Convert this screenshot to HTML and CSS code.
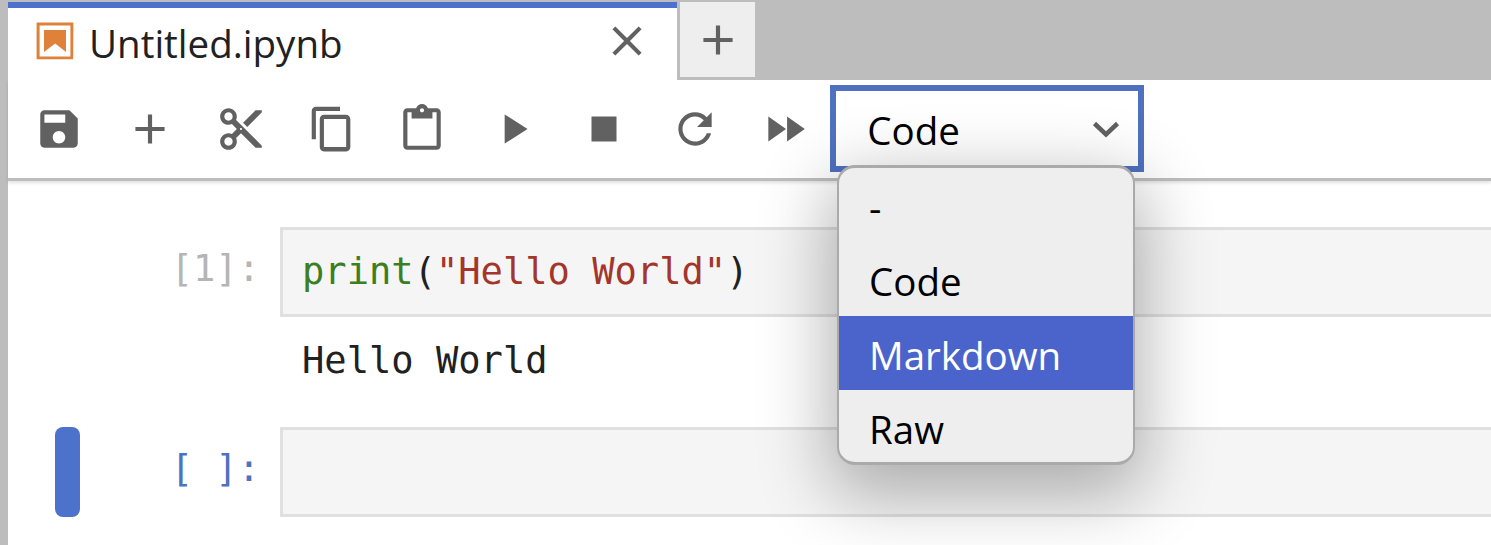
FILE: index.html
```html
<!DOCTYPE html>
<html lang="en">
<head>
<meta charset="utf-8">
<title>Untitled.ipynb</title>
<link rel="stylesheet" href="styles.css">
</head>
<body>
<div class="app">
  <div class="tabbar">
    <div class="tab">
      <svg class="tab-icon" viewBox="0 0 22 22"><path class="orange" d="M18.7 3.3v15.4H3.3V3.3h15.4m1.5-1.5H1.8v18.3h18.3l.1-18.3z"/><path class="orange" d="M16.5 16.5l-5.4-4.3-5.6 4.3v-11h11z"/></svg>
      <span class="tab-title">Untitled.ipynb</span>
      <svg class="tab-close" viewBox="0 0 24 24"><path d="M19 6.41L17.59 5 12 10.59 6.41 5 5 6.41 10.59 12 5 17.59 6.41 19 12 13.41 17.59 19 19 17.59 13.41 12z"/></svg>
    </div>
    <div class="new-tab">
      <svg class="icon" viewBox="0 0 24 24"><path d="M19 13h-6v6h-2v-6H5v-2h6V5h2v6h6v2z"/></svg>
    </div>
  </div>
  <div class="toolbar">
    <div class="tool"><svg class="icon" viewBox="0 0 24 24"><path d="M17 3H5c-1.11 0-2 .9-2 2v14c0 1.1.89 2 2 2h14c1.1 0 2-.9 2-2V7l-4-4zm-5 16c-1.66 0-3-1.34-3-3s1.34-3 3-3 3 1.34 3 3-1.34 3-3 3zm3-10H5V5h10v4z"/></svg></div>
    <div class="tool"><svg class="icon" viewBox="0 0 24 24"><path d="M19 13h-6v6h-2v-6H5v-2h6V5h2v6h6v2z"/></svg></div>
    <div class="tool"><svg class="icon" viewBox="0 0 24 24"><path d="M9.64 7.64c.23-.5.36-1.05.36-1.64 0-2.21-1.79-4-4-4S2 3.79 2 6s1.79 4 4 4c.59 0 1.14-.13 1.64-.36L10 12l-2.36 2.36C7.14 14.13 6.59 14 6 14c-2.21 0-4 1.79-4 4s1.79 4 4 4 4-1.79 4-4c0-.59-.13-1.14-.36-1.64L12 14l7 7h3v-1L9.64 7.64zM6 8c-1.1 0-2-.89-2-2s.9-2 2-2 2 .89 2 2-.9 2-2 2zm0 12c-1.1 0-2-.89-2-2s.9-2 2-2 2 .89 2 2-.9 2-2 2zm6-7.5c-.28 0-.5-.22-.5-.5s.22-.5.5-.5.5.22.5.5-.22.5-.5.5zM19 3l-6 6 2 2 7-7V3z"/></svg></div>
    <div class="tool"><svg class="icon" viewBox="0 0 18 18"><path d="M11.9,1H3.2C2.4,1,1.7,1.7,1.7,2.5v10.2h1.5V2.5h8.7V1z M14.1,3.9h-8c-0.8,0-1.5,0.7-1.5,1.5v10.2c0,0.8,0.7,1.5,1.5,1.5h8c0.8,0,1.5-0.7,1.5-1.5V5.4C15.5,4.6,14.9,3.9,14.1,3.9z M14.1,15.5h-8V5.4h8V15.5z"/></svg></div>
    <div class="tool"><svg class="icon" viewBox="0 0 24 24"><path d="M19 2h-4.18C14.4.84 13.3 0 12 0c-1.3 0-2.4.84-2.82 2H5c-1.1 0-2 .9-2 2v16c0 1.1.9 2 2 2h14c1.1 0 2-.9 2-2V4c0-1.1-.9-2-2-2zm-7 0c.55 0 1 .45 1 1s-.45 1-1 1-1-.45-1-1 .45-1 1-1zm7 18H5V4h2v3h10V4h2v16z"/></svg></div>
    <div class="tool"><svg class="icon" viewBox="0 0 24 24"><path d="M8 5v14l11-7z"/></svg></div>
    <div class="tool"><svg class="icon" viewBox="0 0 24 24"><path d="M6 6h12v12H6z"/></svg></div>
    <div class="tool"><svg class="icon" viewBox="0 0 24 24"><path d="M17.65 6.35C16.2 4.9 14.21 4 12 4c-4.42 0-7.99 3.58-7.99 8s3.57 8 7.99 8c3.73 0 6.84-2.55 7.73-6h-2.08c-.82 2.33-3.04 4-5.65 4-3.31 0-6-2.69-6-6s2.69-6 6-6c1.66 0 3.14.69 4.22 1.78L13 11h7V4l-2.35 2.35z"/></svg></div>
    <div class="tool"><svg class="icon" viewBox="0 0 24 24"><path d="M4 18l8.5-6L4 6v12zm9-12v12l8.5-6L13 6z"/></svg></div>
    <div class="select">
      <span class="select-value">Code</span>
      <svg class="chevron" viewBox="0 0 28 18"><path d="M2.5 3.5L14 14.5 25.500 3.500"/></svg>
    </div>
  </div>
  <div class="notebook">
    <div class="cell">
      <div class="collapser"></div>
      <div class="prompt">[1]:</div>
      <div class="input"><span class="kw">print</span>(<span class="str">"Hello World"</span>)</div>
    </div>
    <div class="output">Hello World</div>
    <div class="cell">
      <div class="collapser active"></div>
      <div class="prompt active">[ ]:</div>
      <div class="input"></div>
    </div>
  </div>
  <ul class="menu">
    <li class="menu-item">-</li>
    <li class="menu-item">Code</li>
    <li class="menu-item selected">Markdown</li>
    <li class="menu-item">Raw</li>
  </ul>
</div>
</body>
</html>
```
FILE: styles.css
```css
* { box-sizing: border-box; }
html, body { margin: 0; height: 100%; overflow: hidden; }
body { background: #bdbdbd; font-family: "Open Sans", "Noto Sans", sans-serif; }
.app { position: relative; height: 545px; padding-left: 8px; overflow: hidden; }
.tabbar { display: flex; height: 80px; padding-top: 2px; background: #bdbdbd; }
.tab { display: flex; align-items: center; width: 669px; height: 78px; padding: 0 25px 0 25px; border-top: 6px solid #4d72cb; background: #fff; }
.tab-icon { width: 44px; height: 44px; margin-top: -6px; }
.orange { fill: #df8138; }
.tab-title { flex: 1; margin-left: 12px; margin-top: -2px; font-size: 38.500px; color: #212121; }
.tab-close { width: 50px; height: 50px; margin-top: -6px; fill: #616161; }
.new-tab { display: flex; align-items: center; justify-content: center; width: 78px; height: 78px; border-left: 3px solid #bdbdbd; border-bottom: 3px solid #bdbdbd; background: #eee; }
.icon { width: 50px; height: 50px; fill: #616161; }
.toolbar { display: flex; align-items: center; height: 101px; padding: 0 0 1px 6px; border-bottom: 3px solid #bdbdbd; background: #fff; box-shadow: 0 2px 3px rgba(0,0,0,.12); position: relative; }
.tool { display: flex; align-items: center; justify-content: center; flex: none; width: 90.750px; }
.select { display: flex; align-items: center; justify-content: space-between; width: 314px; height: 87px; margin-left: -.5px; padding: 0 18px 0 31px; border: 6px solid #4f72c0; background: #fff; }
.select-value { margin-top: 2px; font-size: 38.500px; color: #000; }
.chevron { width: 28px; height: 18px; fill: none; stroke: #616161; stroke-width: 4.500; }
.notebook { height: 364px; padding-top: 46px; background: #fff; font-family: "DejaVu Sans Mono", monospace; font-size: 37.100px; }
.cell { display: flex; height: 90px; padding-left: 47px; }
.collapser { flex: none; width: 25px; border-radius: 8px; }
.collapser.active { background: #4d72cb; }
.prompt { flex: none; width: 200px; padding: 20px 20px 0 0; text-align: right; line-height: 44px; color: #b5b5b5; }
.prompt.active { color: #4d72c2; }
.input { flex: 1; margin-right: -10px; padding: 20px 19px 0; line-height: 44px; border: 3px solid #e0e0e0; background: #f5f5f5; color: #212121; }
.kw { color: #3c7f1f; }
.str { color: #a4352a; }
.output { height: 110px; padding: 22px 0 0 294px; line-height: 44px; color: #212121; }
.menu { position: absolute; left: 837px; top: 165px; width: 298px; height: 300px; margin: 0; padding: 0; list-style: none; overflow: hidden; border: 3px solid #aaa; border-width: 3px 2px; border-radius: 18px; background: #eee; box-shadow: 0 22px 70px 8px rgba(0,0,0,.3); }
.menu-item { height: 74px; padding-left: 30px; line-height: 78px; font-size: 38.500px; color: #000; }
.menu-item.selected { background: #4a64cc; color: #fff; }
```
